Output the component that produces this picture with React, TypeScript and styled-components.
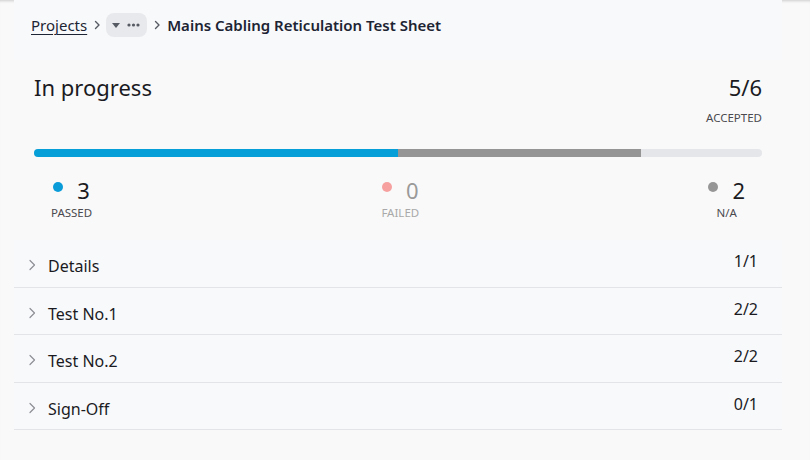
import React from "react";
import styled, { createGlobalStyle } from "styled-components";

const Global = createGlobalStyle`
  html, body { margin: 0; padding: 0; background: #f9f9f9; }
  body { font-family: "Segoe UI", "Noto Sans", "Open Sans", sans-serif; color: #1b1b1f; }
  * { box-sizing: border-box; }
`;

const Page = styled.div`
  width: 810px;
  height: 460px;
  position: relative;
  overflow: hidden;
  background: #f9f9f9;
  box-shadow: inset 0 3px 3px -2px rgba(0, 0, 0, 0.18);
`;

const Column = styled.div`
  width: 768px;
  margin-left: 14px;
  display: flex;
  flex-direction: column;
`;

const Breadcrumb = styled.nav`
  height: 60px;
  background: #f8f9fb;
  display: flex;
  align-items: center;
  padding: 0 0 10px 17px;
  font-size: 15px;
`;

const Crumb = styled.a`
  color: #1d2433;
  text-decoration: underline;
  text-underline-offset: 3px;
  text-decoration-thickness: 1px;
`;

const Sep = styled.span`
  display: inline-flex;
  width: 19px;
  justify-content: center;
  color: #555a63;
`;

const Pill = styled.span`
  display: inline-flex;
  align-items: center;
  gap: 7px;
  height: 24px;
  padding: 0 7px 0 6px;
  background: #e8e9ec;
  border-radius: 8px;
  color: #555a63;
`;

const Current = styled.span`
  font-weight: 600;
  color: #1d2433;
  font-size: 15px;
  margin-left: 1px;
`;

const Status = styled.section`
  padding: 12px 20px 0 20px;
  height: 180px;
  background: #f9f9f9;
`;

const TopRow = styled.div`
  display: flex;
  justify-content: space-between;
  align-items: flex-start;
`;

const Title = styled.h1`
  margin: 0;
  font-size: 22px;
  font-weight: 400;
  line-height: 30px;
  color: #1b1b1f;
`;

const Accepted = styled.div`
  display: flex;
  flex-direction: column;
  align-items: flex-end;
  gap: 9px;
`;

const Big = styled.span<{ $muted?: boolean }>`
  font-size: 22px;
  line-height: 30px;
  color: ${(p) => (p.$muted ? "#9a9a9a" : "#1b1b1f")};
`;

const Caption = styled.span<{ $muted?: boolean }>`
  font-size: 11.5px;
  line-height: 14px;
  text-transform: uppercase;
  color: ${(p) => (p.$muted ? "#a9a9a9" : "#4a4a4f")};
`;

const Bar = styled.div`
  margin-top: 24px;
  height: 8px;
  border-radius: 4px;
  background: #e5e6ea;
  display: flex;
  overflow: hidden;
`;

const Seg = styled.div<{ $color: string }>`
  height: 100%;
  background: ${(p) => p.$color};
`;

const Stats = styled.div`
  margin-top: 19px;
  display: flex;
  justify-content: space-between;
  padding: 0 17px;
`;

const Stat = styled.div`
  display: flex;
  flex-direction: column;
  align-items: center;
  gap: 2px;
`;

const StatTop = styled.div`
  display: flex;
  align-items: center;
  gap: 14px;
  height: 28px;
`;

const Dot = styled.span<{ $color: string }>`
  width: 10px;
  height: 10px;
  border-radius: 50%;
  background: ${(p) => p.$color};
  margin-top: -6px;
`;

const List = styled.ul`
  list-style: none;
  margin: 0;
  padding: 0;
  background: #f8f9fb;
`;

const Row = styled.li`
  height: 47.5px;
  display: flex;
  align-items: center;
  padding: 0 24px 0 12px;
  border-bottom: 1px solid #e3e4e8;
  font-size: 16px;
  color: #1b1b1f;
`;

const Chevron = styled.span`
  display: inline-flex;
  width: 12px;
  color: #8d8f94;
  margin-right: 10px;
  margin-top: 4px;
`;

const Label = styled.span`
  flex: 1;
  margin-top: 6px;
`;

const Count = styled.span`
  font-size: 16px;
  margin-top: -4px;
`;

const ChevronRight = ({ size = 10, w = 1.4 }: { size?: number; w?: number }) => (
  <svg width={size} height={size} viewBox="0 0 10 10" fill="none">
    <path d="M3.5 1.5 L7 5 L3.5 8.5" stroke="currentColor" strokeWidth={w} strokeLinecap="round" strokeLinejoin="round" />
  </svg>
);

const RowChevron = () => (
  <svg width="12" height="12" viewBox="0 0 12 12" fill="none">
    <path d="M4 1.5 L8.5 6 L4 10.5" stroke="currentColor" strokeWidth={1.2} strokeLinecap="round" strokeLinejoin="round" />
  </svg>
);

const rows = [
  { name: "Details", count: "1/1" },
  { name: "Test No.1", count: "2/2" },
  { name: "Test No.2", count: "2/2" },
  { name: "Sign-Off", count: "0/1" },
];

export default function App() {
  return (
    <Page>
      <Global />
      <Column>
        <Breadcrumb>
          <Crumb>Projects</Crumb>
          <Sep><ChevronRight /></Sep>
          <Pill>
            <svg width="8" height="5" viewBox="0 0 8 5"><path d="M0 0 H8 L4 5 Z" fill="currentColor" /></svg>
            <svg width="13" height="4" viewBox="0 0 13 4">
              <circle cx="2" cy="2" r="1.6" fill="currentColor" />
              <circle cx="6.5" cy="2" r="1.6" fill="currentColor" />
              <circle cx="11" cy="2" r="1.6" fill="currentColor" />
            </svg>
          </Pill>
          <Sep><ChevronRight /></Sep>
          <Current>Mains Cabling Reticulation Test Sheet</Current>
        </Breadcrumb>
        <Status>
          <TopRow>
            <Title>In progress</Title>
            <Accepted>
              <Big>5/6</Big>
              <Caption>Accepted</Caption>
            </Accepted>
          </TopRow>
          <Bar>
            <Seg $color="#069fd8" style={{ width: `${(3 / 6) * 100}%` }} />
            <Seg $color="#959595" style={{ width: `${(2 / 6) * 100}%` }} />
          </Bar>
          <Stats>
            <Stat>
              <StatTop><Dot $color="#0a9bd9" /><Big>3</Big></StatTop>
              <Caption>Passed</Caption>
            </Stat>
            <Stat>
              <StatTop><Dot $color="#f6a0a0" /><Big $muted>0</Big></StatTop>
              <Caption $muted>Failed</Caption>
            </Stat>
            <Stat>
              <StatTop><Dot $color="#969696" /><Big>2</Big></StatTop>
              <Caption>N/A</Caption>
            </Stat>
          </Stats>
        </Status>
        <List>
          {rows.map((r) => (
            <Row key={r.name}>
              <Chevron><RowChevron /></Chevron>
              <Label>{r.name}</Label>
              <Count>{r.count}</Count>
            </Row>
          ))}
        </List>
      </Column>
    </Page>
  );
}
